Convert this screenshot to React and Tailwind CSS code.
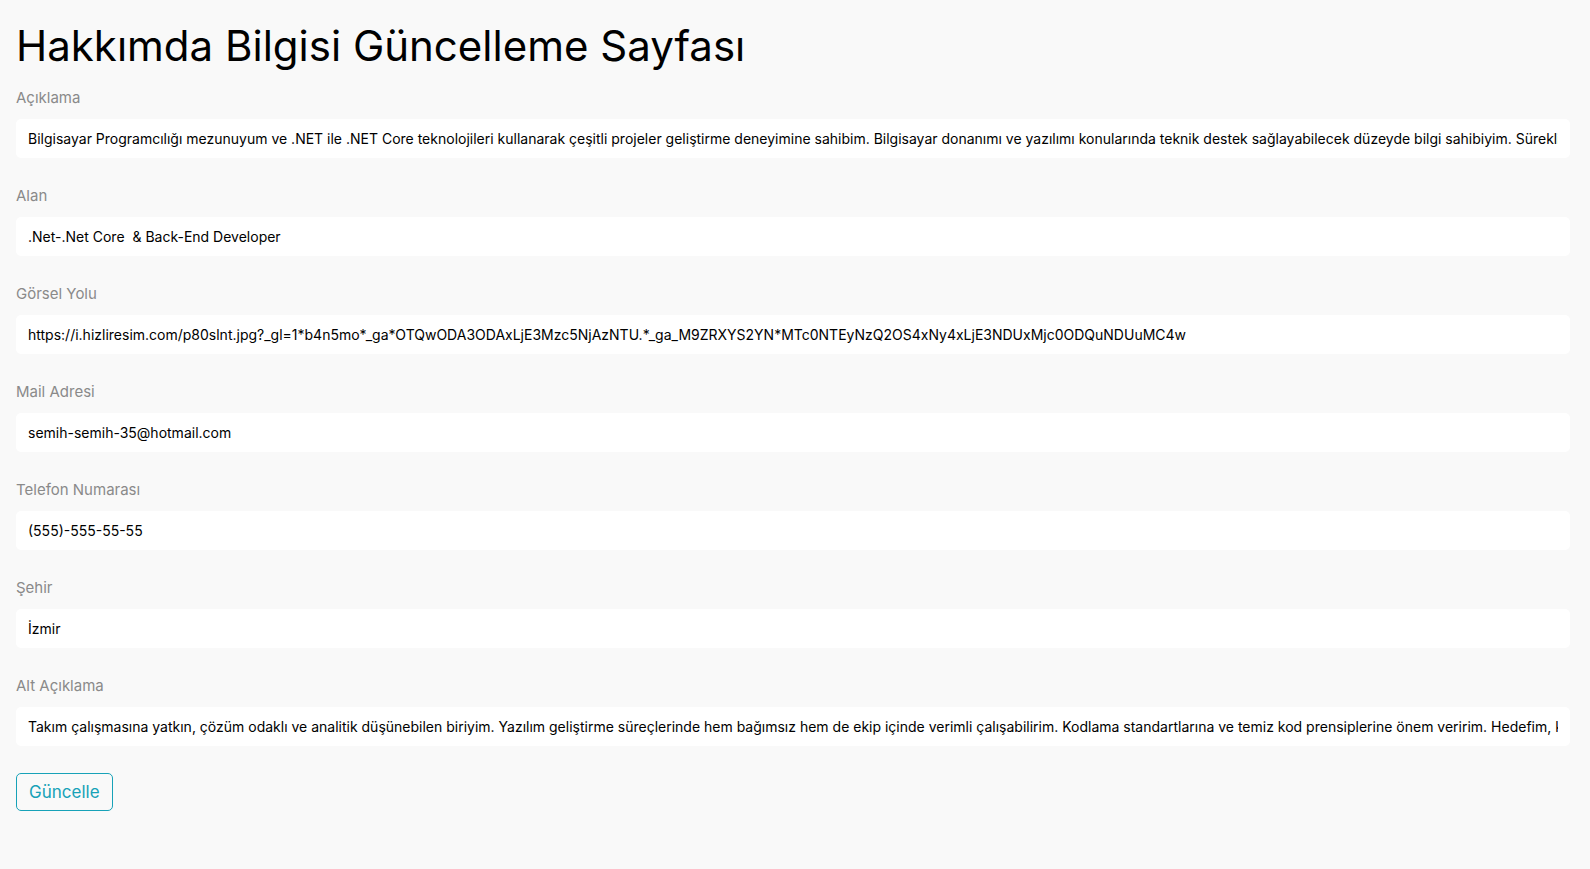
import React from "react";

const fields = [
  {
    label: "Açıklama",
    value:
      "Bilgisayar Programcılığı mezunuyum ve .NET ile .NET Core teknolojileri kullanarak çeşitli projeler geliştirme deneyimine sahibim. Bilgisayar donanımı ve yazılımı konularında teknik destek sağlayabilecek düzeyde bilgi sahibiyim. Sürekli öğrenmeye ve kendimi geliştirmeye açığım.",
  },
  { label: "Alan", value: ".Net-.Net Core  & Back-End Developer" },
  {
    label: "Görsel Yolu",
    value:
      "https://i.hizliresim.com/p80slnt.jpg?_gl=1*b4n5mo*_ga*OTQwODA3ODAxLjE3Mzc5NjAzNTU.*_ga_M9ZRXYS2YN*MTc0NTEyNzQ2OS4xNy4xLjE3NDUxMjc0ODQuNDUuMC4w",
  },
  { label: "Mail Adresi", value: "semih-semih-35@hotmail.com" },
  { label: "Telefon Numarası", value: "(555)-555-55-55" },
  { label: "Şehir", value: "İzmir" },
  {
    label: "Alt Açıklama",
    value:
      "Takım çalışmasına yatkın, çözüm odaklı ve analitik düşünebilen biriyim. Yazılım geliştirme süreçlerinde hem bağımsız hem de ekip içinde verimli çalışabilirim. Kodlama standartlarına ve temiz kod prensiplerine önem veririm. Hedefim, katnı sağlamaktır.",
  },
];

export default function App() {
  return (
    <div
      className="min-h-screen bg-[#f9f9f9] pl-4 pr-5 pt-[22px]"
      style={{ fontFamily: "Inter, 'Open Sans', sans-serif" }}
    >
      <h1 className="mb-[16px] text-[42px] font-normal leading-[48px] text-black">
        Hakkımda Bilgisi Güncelleme Sayfası
      </h1>
      <form onSubmit={(e) => e.preventDefault()}>
        {fields.map((f) => (
          <div key={f.label} className="mb-[26px]">
            <label className="mb-[9px] block text-[15px] leading-6 text-[#8a8a8a]">
              {f.label}
            </label>
            <input
              type="text"
              defaultValue={f.value}
              className="block h-[39px] w-full rounded-[5px] border-0 bg-white px-3 text-sm text-black outline-none"
            />
          </div>
        ))}
        <button
          type="submit"
          className="mt-px rounded-[5px] border border-[#17a2b8] bg-transparent px-3 py-1.5 text-[17px] leading-6 text-[#17a2b8]"
        >
          Güncelle
        </button>
      </form>
    </div>
  );
}
